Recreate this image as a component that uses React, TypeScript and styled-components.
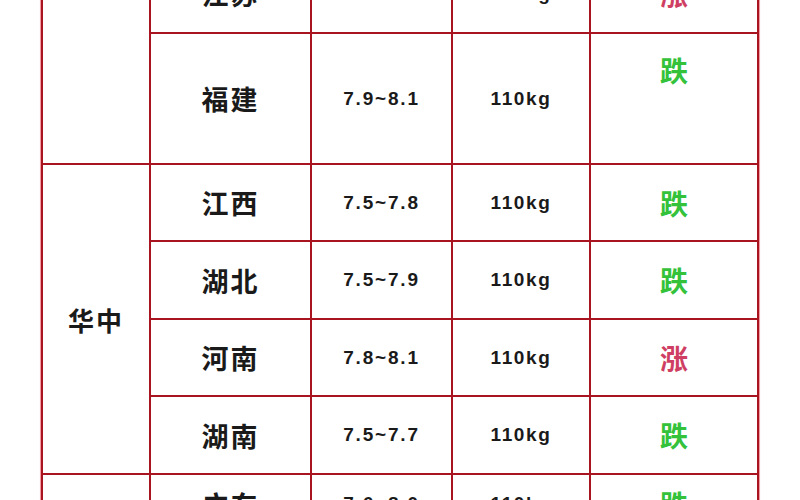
import React from "react";
import styled, { createGlobalStyle } from "styled-components";

const GlobalStyle = createGlobalStyle`
  html, body {
    margin: 0;
    padding: 0;
    background: #ffffff;
  }
`;

const Viewport = styled.div`
  width: 800px;
  height: 500px;
  overflow: hidden;
  background: #ffffff;
`;

const Grid = styled.div`
  display: grid;
  grid-template-columns: 106px 159px 139px 136px 166px;
  grid-template-rows: 77px 129px 75px 76px 75px 76px 58px;
  gap: 2px;
  padding: 2px;
  width: fit-content;
  margin: -47px 0 0 41px;
  background: #a8141f;
  box-shadow: 0 0 0.6px 0.6px rgba(230, 40, 50, 0.45);
`;

const Cell = styled.div<{ $span?: number; $top?: number }>`
  background: #ffffff;
  display: flex;
  justify-content: center;
  align-items: ${(p) => (p.$top !== undefined ? "flex-start" : "center")};
  padding-top: ${(p) => (p.$top !== undefined ? `${p.$top}px` : "0")};
  grid-row: ${(p) => (p.$span ? `span ${p.$span}` : "auto")};
  box-sizing: border-box;
`;

const Region = styled.span`
  font-family: "Noto Sans CJK SC", sans-serif;
  font-weight: 700;
  font-size: 26px;
  letter-spacing: 2px;
  color: #1a1a1a;
`;

const Province = styled.span`
  font-family: "Noto Sans CJK SC", sans-serif;
  font-weight: 700;
  font-size: 27px;
  letter-spacing: 2px;
  color: #1a1a1a;
`;

const Value = styled.span<{ $spacing: number }>`
  font-family: "Liberation Sans", Arial, sans-serif;
  font-weight: 700;
  font-size: 19px;
  letter-spacing: ${(p) => p.$spacing}px;
  color: #1a1a1a;
`;

const Trend = styled.span<{ $up: boolean }>`
  font-family: "Noto Sans CJK SC", sans-serif;
  font-weight: 700;
  font-size: 28px;
  color: ${(p) => (p.$up ? "#cf3f63" : "#33c23a")};
`;

type Row = {
  province: string;
  range: string;
  weight: string;
  up: boolean;
  trendTop?: number;
};

const east: Row[] = [
  { province: "江苏", range: "7.7~8.2", weight: "110kg", up: true },
  { province: "福建", range: "7.9~8.1", weight: "110kg", up: false, trendTop: 16 },
];

const central: Row[] = [
  { province: "江西", range: "7.5~7.8", weight: "110kg", up: false },
  { province: "湖北", range: "7.5~7.9", weight: "110kg", up: false },
  { province: "河南", range: "7.8~8.1", weight: "110kg", up: true },
  { province: "湖南", range: "7.5~7.7", weight: "110kg", up: false },
];

const south: Row[] = [
  { province: "广东", range: "7.6~8.0", weight: "110kg", up: false },
];

const renderRow = (r: Row) => (
  <React.Fragment key={r.province}>
    <Cell>
      <Province>{r.province}</Province>
    </Cell>
    <Cell>
      <Value $spacing={1.8}>{r.range}</Value>
    </Cell>
    <Cell>
      <Value $spacing={1.6}>{r.weight}</Value>
    </Cell>
    <Cell $top={r.trendTop}>
      <Trend $up={r.up}>{r.up ? "涨" : "跌"}</Trend>
    </Cell>
  </React.Fragment>
);

const App: React.FC = () => {
  return (
    <>
      <GlobalStyle />
      <Viewport>
        <Grid>
          <Cell $span={east.length} />
          {east.map(renderRow)}
          <Cell $span={central.length}>
            <Region>华中</Region>
          </Cell>
          {central.map(renderRow)}
          <Cell $span={south.length} />
          {south.map(renderRow)}
        </Grid>
      </Viewport>
    </>
  );
};

export default App;
